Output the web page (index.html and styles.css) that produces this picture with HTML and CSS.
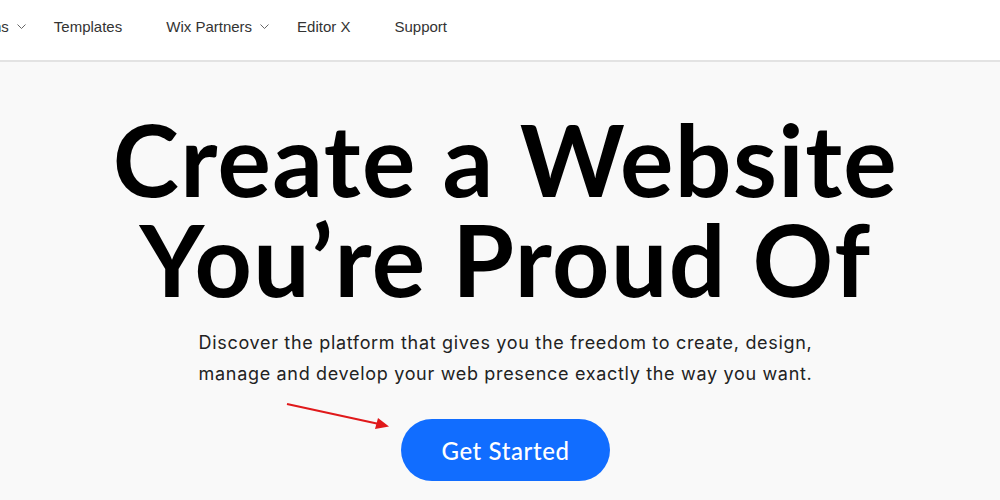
FILE: index.html
```html
<!DOCTYPE html>
<html lang="en">
<head>
<meta charset="utf-8">
<title>Wix</title>
<link rel="stylesheet" href="styles.css">
</head>
<body>
<header class="topbar">
  <nav class="nav">
    <span class="nav-item has-menu">ns<svg class="chev" viewBox="0 0 9 5" width="9" height="5"><path d="M0.5 0.5 L4.5 4.5 L8.5 0.5" fill="none" stroke="#666" stroke-width="1"/></svg></span>
    <span class="nav-item">Templates</span>
    <span class="nav-item has-menu">Wix Partners<svg class="chev" viewBox="0 0 9 5" width="9" height="5"><path d="M0.5 0.5 L4.5 4.5 L8.5 0.5" fill="none" stroke="#666" stroke-width="1"/></svg></span>
    <span class="nav-item">Editor X</span>
    <span class="nav-item">Support</span>
  </nav>
</header>
<main class="hero">
  <h1 class="title"><span class="title-line">Create a Website</span><span class="title-line">You’re Proud Of</span></h1>
  <p class="lead">Discover the platform that gives you the freedom to create, design,<br>manage and develop your web presence exactly the way you want.</p>
  <div class="cta-wrap">
    <a class="cta" href="#">Get Started</a>
    <svg class="arrow" width="120" height="40" viewBox="0 0 120 40">
      <line x1="2" y1="2" x2="94" y2="22" stroke="#e0191b" stroke-width="2.2"/>
      <polygon points="104,24.5 90,27 93,16" fill="#e0191b"/>
    </svg>
  </div>
</main>
</body>
</html>
```

FILE: styles.css
```css
html, body {
  margin: 0;
  padding: 0;
}
body {
  background: #f9f9f9;
  font-family: "Liberation Sans", Arial, sans-serif;
  color: #000;
  width: 1000px;
  height: 500px;
  overflow: hidden;
}
.topbar {
  height: 60px;
  background: #fff;
  border-bottom: 2px solid #e3e3e3;
  display: flex;
  align-items: center;
  overflow: hidden;
}
.nav {
  display: flex;
  align-items: center;
  gap: 28px;
  margin-left: -7px;
  padding-bottom: 8px;
  font-size: 15px;
  color: #333;
}
.nav-item {
  display: flex;
  align-items: center;
  padding-right: 16px;
  white-space: nowrap;
}
.nav-item.has-menu {
  padding-right: 0;
}
.chev {
  margin-left: 8px;
  margin-top: 1px;
}
.hero {
  display: flex;
  flex-direction: column;
  align-items: center;
  padding-left: 11px;
}
.title {
  margin: 46px 0 0;
  font-family: "Lato", sans-serif;
  font-weight: 700;
  font-size: 100px;
  line-height: 100px;
  text-align: center;
  letter-spacing: 1.4px;
}
.title-line {
  display: block;
  height: 100px;
}
.lead {
  margin: 19px 0 0;
  font-family: "Inter", sans-serif;
  font-size: 18px;
  line-height: 31px;
  letter-spacing: 0.68px;
  color: #222;
  text-align: center;
}
.cta-wrap {
  position: relative;
  margin-top: 30px;
}
.cta {
  display: flex;
  align-items: center;
  justify-content: center;
  width: 209px;
  height: 62px;
  border-radius: 31px;
  background: #116dff;
  color: #fff;
  text-decoration: none;
  font-family: "Lato", sans-serif;
  font-size: 24px;
  font-weight: 500;
  letter-spacing: 0.6px;
}
.arrow {
  position: absolute;
  left: -116px;
  top: -17px;
}
```
